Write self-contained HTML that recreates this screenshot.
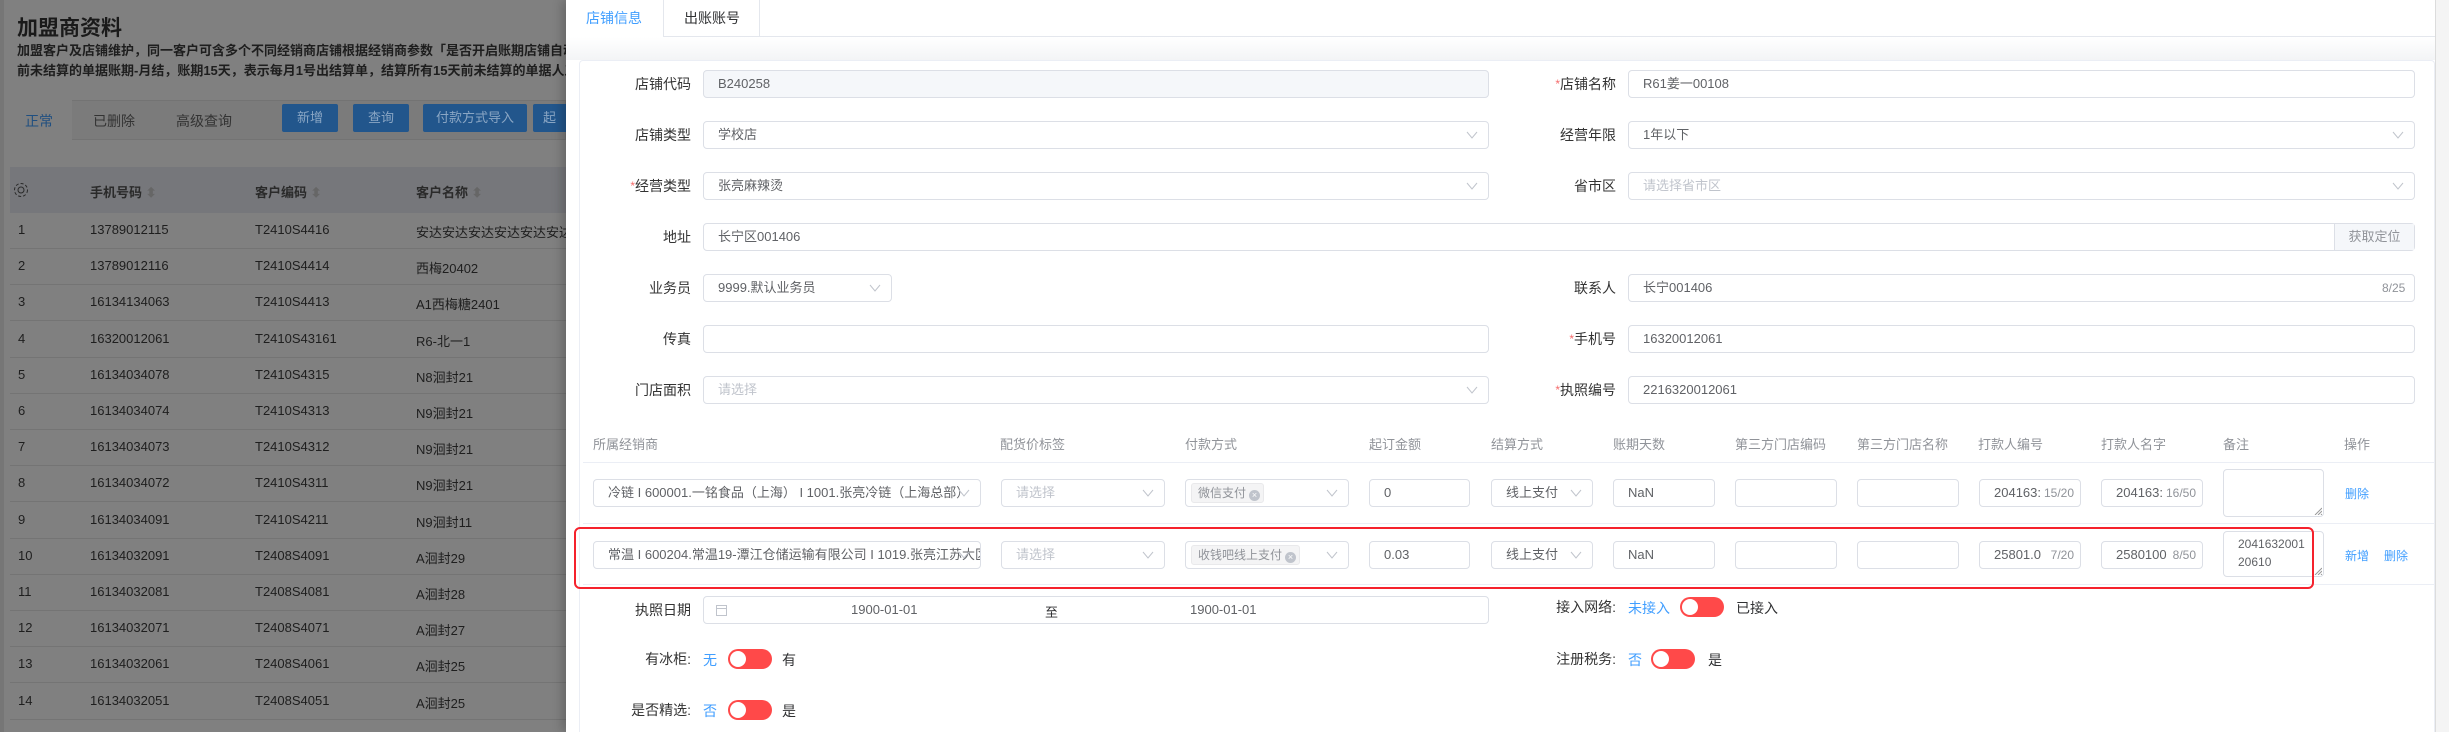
<!DOCTYPE html>
<html><head><meta charset="utf-8">
<style>
*{box-sizing:border-box;margin:0;padding:0}
html{width:2449px;height:732px;overflow:hidden}
body{width:2449px;height:732px;overflow:hidden;position:relative;background:#808080;font-family:"Liberation Sans","Noto Sans CJK SC",sans-serif;color:#1c1c1c}
.a{position:absolute;white-space:nowrap}
.lt{font-size:13px;color:#1e1e1e}
.inp{position:absolute;height:28px;border:1px solid #dcdfe6;border-radius:4px;background:#fff;font-size:13px;color:#606266;line-height:26px;padding-left:14px;white-space:nowrap;overflow:hidden}
.arr{position:absolute;right:10px;top:8px;width:12px;height:10px}
.lbl{position:absolute;font-size:14px;color:#333;text-align:right;width:120px;line-height:28px}
.req{color:#f56c6c;font-size:12px;vertical-align:top}
.th{position:absolute;top:434px;font-size:13px;color:#909399}
.tag{position:absolute;height:20px;background:#f4f4f5;border:1px solid #e9e9eb;border-radius:3px;font-size:12px;color:#909399;line-height:18px;padding-left:6px}
.tx{display:inline-block;width:11px;height:11px;border-radius:50%;background:#c0c4cc;color:#fff;font-size:9px;line-height:11px;text-align:center;margin-left:3px;vertical-align:-1px}
.sw{position:absolute;width:44px;height:20px;border-radius:10px;background:#ff4949}
.sw:after{content:"";position:absolute;left:2px;top:2px;width:16px;height:16px;border-radius:50%;background:#fff}
.blue{color:#409eff}
.cnt{position:absolute;font-size:12px;color:#909399}
</style></head><body>
<svg width="0" height="0" style="position:absolute"><defs><symbol id="ch" viewBox="0 0 12 10"><polyline points="1,2 6,8 11,2" fill="none" stroke="#c0c4cc" stroke-width="1"/></symbol></defs></svg>

<div class="a" style="left:0;top:0;width:4px;height:732px;background:#767676"></div>
<div class="a" style="left:17px;top:12px;font-size:21px;font-weight:bold;color:#1a1a1a">加盟商资料</div>
<div class="a" style="left:17px;top:40px;font-size:13px;color:#1e1e1e;font-weight:bold">加盟客户及店铺维护，同一客户可含多个不同经销商店铺根据经销商参数「是否开启账期店铺自动出结算单」</div>
<div class="a" style="left:17px;top:60px;font-size:13px;color:#1e1e1e;font-weight:bold">前未结算的单据账期-月结，账期15天，表示每月1号出结算单，结算所有15天前未结算的单据人工新增结算单</div>
<div class="a" style="left:4px;top:100px;width:562px;height:40px;background:#7b7b7b;border:1px solid #737373"></div>
<div class="a" style="left:4px;top:100px;width:68px;height:40px;background:#808080"></div>
<div class="a" style="left:25px;top:111px;font-size:14px;color:#204f80">正常</div>
<div class="a" style="left:93px;top:111px;font-size:14px;color:#333">已删除</div>
<div class="a" style="left:176px;top:111px;font-size:14px;color:#333">高级查询</div>
<div class="a" style="left:282px;top:104px;width:56px;height:28px;background:#22568c;border-radius:2px;color:#8aa6c4;font-size:13px;line-height:28px;text-align:center">新增</div>
<div class="a" style="left:353px;top:104px;width:56px;height:28px;background:#22568c;border-radius:2px;color:#8aa6c4;font-size:13px;line-height:28px;text-align:center">查询</div>
<div class="a" style="left:423px;top:104px;width:104px;height:28px;background:#22568c;border-radius:2px;color:#8aa6c4;font-size:13px;line-height:28px;text-align:center">付款方式导入</div>
<div class="a" style="left:533px;top:104px;width:40px;height:28px;background:#22568c;border-radius:2px;color:#8aa6c4;font-size:13px;line-height:28px;padding-left:10px">起</div>
<div class="a" style="left:10px;top:167px;width:556px;height:46px;background:#76777b"></div>
<svg class="a" style="left:13px;top:182px" width="16" height="16" viewBox="0 0 16 16"><circle cx="8" cy="8" r="3" fill="none" stroke="#2a2a2a" stroke-width="1"/><circle cx="8" cy="8" r="6.5" fill="none" stroke="#2a2a2a" stroke-width="1" stroke-dasharray="3 2"/></svg>
<div class="a" style="left:90px;top:182px;font-size:13px;font-weight:bold;color:#2a2a2a">手机号码 <span style="color:#666">⬍</span></div>
<div class="a" style="left:255px;top:182px;font-size:13px;font-weight:bold;color:#2a2a2a">客户编码 <span style="color:#666">⬍</span></div>
<div class="a" style="left:416px;top:182px;font-size:13px;font-weight:bold;color:#2a2a2a">客户名称 <span style="color:#666">⬍</span></div>
<div id="rows"></div>

<div class="a" style="left:566px;top:0;width:1883px;height:732px;background:#fff;box-shadow:-4px 0 10px rgba(0,0,0,.2)"></div>
<div class="a" style="left:566px;top:37px;width:1869px;height:23px;background:linear-gradient(#fff,#f3f4f6)"></div>
<div class="a" style="left:663px;top:0;width:97px;height:37px;border-left:1px solid #e4e7ed;border-right:1px solid #e4e7ed"></div>
<div class="a" style="left:663px;top:36px;width:1772px;height:1px;background:#e4e7ed"></div>
<div class="a" style="left:586px;top:8px;font-size:14px;color:#409eff">店铺信息</div>
<div class="a" style="left:684px;top:8px;font-size:14px;color:#303133">出账账号</div>
<div class="a" style="left:579px;top:60px;width:1856px;height:672px;border:1px solid #ebeef5;border-bottom:none;border-radius:4px 4px 0 0;background:#fff"></div>
<div class="a" style="left:2435px;top:0;width:14px;height:732px;background:#f4f4f4;border-left:1px solid #dcdcdc"></div>

<div class="lbl" style="left:571px;top:70px">店铺代码</div>
<div class="inp" style="left:703px;top:70px;width:786px;background:#f5f7fa">B240258</div>
<div class="lbl" style="left:571px;top:121px">店铺类型</div>
<div class="inp" style="left:703px;top:121px;width:786px">学校店<svg class="arr"><use href="#ch"/></svg></div>
<div class="lbl" style="left:571px;top:172px"><span class="req">*</span>经营类型</div>
<div class="inp" style="left:703px;top:172px;width:786px">张亮麻辣烫<svg class="arr"><use href="#ch"/></svg></div>
<div class="lbl" style="left:571px;top:223px">地址</div>
<div class="inp" style="left:703px;top:223px;width:1712px">长宁区001406</div>
<div class="a" style="left:2334px;top:224px;width:80px;height:26px;background:#f5f7fa;border-left:1px solid #dcdfe6;font-size:13px;color:#909399;line-height:26px;text-align:center">获取定位</div>
<div class="lbl" style="left:571px;top:274px">业务员</div>
<div class="inp" style="left:703px;top:274px;width:189px">9999.默认业务员<svg class="arr"><use href="#ch"/></svg></div>
<div class="lbl" style="left:571px;top:325px">传真</div>
<div class="inp" style="left:703px;top:325px;width:786px"></div>
<div class="lbl" style="left:571px;top:376px">门店面积</div>
<div class="inp" style="left:703px;top:376px;width:786px;color:#c0c4cc">请选择<svg class="arr"><use href="#ch"/></svg></div>

<div class="lbl" style="left:1496px;top:70px"><span class="req">*</span>店铺名称</div>
<div class="inp" style="left:1628px;top:70px;width:787px">R61姜一00108</div>
<div class="lbl" style="left:1496px;top:121px">经营年限</div>
<div class="inp" style="left:1628px;top:121px;width:787px">1年以下<svg class="arr"><use href="#ch"/></svg></div>
<div class="lbl" style="left:1496px;top:172px">省市区</div>
<div class="inp" style="left:1628px;top:172px;width:787px;color:#c0c4cc">请选择省市区<svg class="arr"><use href="#ch"/></svg></div>
<div class="lbl" style="left:1496px;top:274px">联系人</div>
<div class="inp" style="left:1628px;top:274px;width:787px">长宁001406</div>
<div class="cnt" style="left:2382px;top:281px">8/25</div>
<div class="lbl" style="left:1496px;top:325px"><span class="req">*</span>手机号</div>
<div class="inp" style="left:1628px;top:325px;width:787px">16320012061</div>
<div class="lbl" style="left:1496px;top:376px"><span class="req">*</span>执照编号</div>
<div class="inp" style="left:1628px;top:376px;width:787px">2216320012061</div>

<div class="th" style="left:593px">所属经销商</div>
<div class="th" style="left:1000px">配货价标签</div>
<div class="th" style="left:1185px">付款方式</div>
<div class="th" style="left:1369px">起订金额</div>
<div class="th" style="left:1491px">结算方式</div>
<div class="th" style="left:1613px">账期天数</div>
<div class="th" style="left:1735px">第三方门店编码</div>
<div class="th" style="left:1857px">第三方门店名称</div>
<div class="th" style="left:1978px">打款人编号</div>
<div class="th" style="left:2101px">打款人名字</div>
<div class="th" style="left:2223px">备注</div>
<div class="th" style="left:2344px">操作</div>
<div class="a" style="left:583px;top:462px;width:1851px;height:1px;background:#ebeef5"></div>
<div class="a" style="left:583px;top:523px;width:1851px;height:1px;background:#ebeef5"></div>
<div class="a" style="left:583px;top:584px;width:1851px;height:1px;background:#ebeef5"></div>

<div class="inp" style="left:593px;top:479px;width:388px;padding-right:30px">冷链 I 600001.一铭食品（上海） I 1001.张亮冷链（上海总部）<svg class="arr"><use href="#ch"/></svg></div>
<div class="inp" style="left:1001px;top:479px;width:164px;color:#c0c4cc">请选择<svg class="arr"><use href="#ch"/></svg></div>
<div class="inp" style="left:1185px;top:479px;width:164px"><svg class="arr"><use href="#ch"/></svg></div>
<div class="tag" style="left:1191px;top:483px">微信支付<span class="tx">×</span>&nbsp;</div>
<div class="inp" style="left:1369px;top:479px;width:101px">0</div>
<div class="inp" style="left:1491px;top:479px;width:102px">线上支付<svg class="arr"><use href="#ch"/></svg></div>
<div class="inp" style="left:1613px;top:479px;width:102px">NaN</div>
<div class="inp" style="left:1735px;top:479px;width:102px"></div>
<div class="inp" style="left:1857px;top:479px;width:102px"></div>
<div class="inp" style="left:1979px;top:479px;width:102px">204163:<span style="position:absolute;right:6px;color:#909399;font-size:12px">15/20</span></div>
<div class="inp" style="left:2101px;top:479px;width:102px">204163:<span style="position:absolute;right:6px;color:#909399;font-size:12px">16/50</span></div>
<div class="inp" style="left:2223px;top:469px;width:101px;height:48px"><svg style="position:absolute;right:1px;bottom:1px" width="8" height="8"><path d="M1 8L8 1M4 8L8 4M7 8L8 7" stroke="#999" stroke-width="1"/></svg></div>
<div class="a blue" style="left:2345px;top:485px;font-size:12px">删除</div>

<div class="inp" style="left:593px;top:541px;width:388px;padding-right:30px">常温 I 600204.常温19-潭江仓储运输有限公司 I 1019.张亮江苏大区<svg class="arr"><use href="#ch"/></svg></div>
<div class="inp" style="left:1001px;top:541px;width:164px;color:#c0c4cc">请选择<svg class="arr"><use href="#ch"/></svg></div>
<div class="inp" style="left:1185px;top:541px;width:164px"><svg class="arr"><use href="#ch"/></svg></div>
<div class="tag" style="left:1191px;top:545px">收钱吧线上支付<span class="tx">×</span>&nbsp;</div>
<div class="inp" style="left:1369px;top:541px;width:101px">0.03</div>
<div class="inp" style="left:1491px;top:541px;width:102px">线上支付<svg class="arr"><use href="#ch"/></svg></div>
<div class="inp" style="left:1613px;top:541px;width:102px">NaN</div>
<div class="inp" style="left:1735px;top:541px;width:102px"></div>
<div class="inp" style="left:1857px;top:541px;width:102px"></div>
<div class="inp" style="left:1979px;top:541px;width:102px">25801.0<span style="position:absolute;right:6px;color:#909399;font-size:12px">7/20</span></div>
<div class="inp" style="left:2101px;top:541px;width:102px">2580100<span style="position:absolute;right:6px;color:#909399;font-size:12px">8/50</span></div>
<div class="inp" style="left:2223px;top:531px;width:101px;height:46px;line-height:18px;padding-top:3px;white-space:normal;font-size:12px">2041632001<br>20610<svg style="position:absolute;right:1px;bottom:1px" width="8" height="8"><path d="M1 8L8 1M4 8L8 4M7 8L8 7" stroke="#999" stroke-width="1"/></svg></div>
<div class="a blue" style="left:2345px;top:547px;font-size:12px">新增</div>
<div class="a blue" style="left:2384px;top:547px;font-size:12px">删除</div>
<div class="a" style="left:574px;top:527px;width:1740px;height:62px;border:2px solid #f5222d;border-radius:6px"></div>

<div class="lbl" style="left:571px;top:596px">执照日期</div>
<div class="inp" style="left:703px;top:596px;width:786px"></div>
<svg class="a" style="left:716px;top:604px" width="11" height="12"><rect x="0.5" y="1.5" width="10" height="10" fill="none" stroke="#c0c4cc"/><line x1="0" y1="4.5" x2="11" y2="4.5" stroke="#c0c4cc"/></svg>
<div class="a" style="left:851px;top:602px;font-size:13px;color:#606266">1900-01-01</div>
<div class="a" style="left:1045px;top:602px;font-size:13px;color:#303133">至</div>
<div class="a" style="left:1190px;top:602px;font-size:13px;color:#606266">1900-01-01</div>

<div class="lbl" style="left:571px;top:645px">有冰柜:</div>
<div class="a blue" style="left:703px;top:650px;font-size:14px">无</div>
<div class="sw" style="left:728px;top:649px"></div>
<div class="a" style="left:782px;top:650px;font-size:14px;color:#303133">有</div>
<div class="lbl" style="left:571px;top:696px">是否精选:</div>
<div class="a blue" style="left:703px;top:701px;font-size:14px">否</div>
<div class="sw" style="left:728px;top:700px"></div>
<div class="a" style="left:782px;top:701px;font-size:14px;color:#303133">是</div>

<div class="lbl" style="left:1496px;top:593px">接入网络:</div>
<div class="a blue" style="left:1628px;top:598px;font-size:14px">未接入</div>
<div class="sw" style="left:1680px;top:597px"></div>
<div class="a" style="left:1736px;top:598px;font-size:14px;color:#303133">已接入</div>
<div class="lbl" style="left:1496px;top:645px">注册税务:</div>
<div class="a blue" style="left:1628px;top:650px;font-size:14px">否</div>
<div class="sw" style="left:1651px;top:649px"></div>
<div class="a" style="left:1708px;top:650px;font-size:14px;color:#303133">是</div>

<script>
var d=[["1","13789012115","T2410S4416","安达安达安达安达安达安达安达"],["2","13789012116","T2410S4414","西梅20402"],["3","16134134063","T2410S4413","A1西梅糖2401"],["4","16320012061","T2410S43161","R6-北一1"],["5","16134034078","T2410S4315","N8洄封21"],["6","16134034074","T2410S4313","N9洄封21"],["7","16134034073","T2410S4312","N9洄封21"],["8","16134034072","T2410S4311","N9洄封21"],["9","16134034091","T2410S4211","N9洄封11"],["10","16134032091","T2408S4091","A洄封29"],["11","16134032081","T2408S4081","A洄封28"],["12","16134032071","T2408S4071","A洄封27"],["13","16134032061","T2408S4061","A洄封25"],["14","16134032051","T2408S4051","A洄封25"],["15","16134032031","T2408S4031","A洄封23"]];
var h="";d.forEach(function(r,i){var y=222+i*36.2;h+='<div class="a lt" style="left:18px;top:'+y+'px">'+r[0]+'</div><div class="a lt" style="left:90px;top:'+y+'px">'+r[1]+'</div><div class="a lt" style="left:255px;top:'+y+'px">'+r[2]+'</div><div class="a lt" style="left:416px;top:'+y+'px;width:150px;overflow:hidden">'+r[3]+'</div><div class="a" style="left:10px;top:'+(y+26)+'px;width:556px;height:1px;background:#747474"></div>';});
document.getElementById("rows").innerHTML=h;
</script>
</body></html>
